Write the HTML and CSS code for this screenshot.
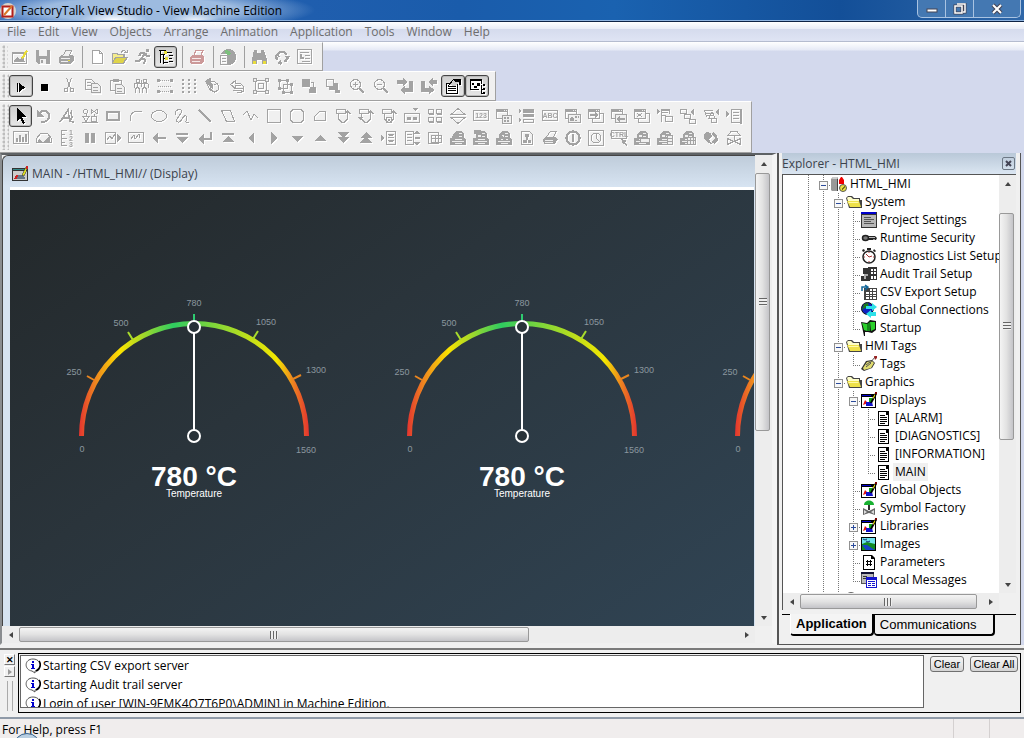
FILE: index.html
```
<!DOCTYPE html>
<html lang="en">
<head>
  <meta charset="UTF-8" />
  <title>FactoryTalk View Studio - View Machine Edition</title>
  <link rel="stylesheet" href="styles.css">
</head>
<body>

  <header class="titlebar">
    <svg class="app-icon" viewBox="0 0 16 16"><circle cx="8" cy="8" r="8" fill="#d9d4cc"/><rect x="2.5" y="3.5" width="10" height="10" fill="#fff" stroke="#b3201c" stroke-width="2"/><path d="M4 12L12 3" stroke="#d8782a" stroke-width="2"/></svg>
    <span class="app-title">FactoryTalk View Studio - View Machine Edition</span>
    <div class="window-buttons">
      <button aria-label="Minimize"><svg viewBox="0 0 16 12"><rect x="3" y="6" width="10" height="3" fill="#fff" stroke="#445" stroke-width="1"/></svg></button>
      <button aria-label="Restore"><svg viewBox="0 0 16 12"><path d="M5 1h8v8h-2M3 3h7v7H3z" fill="none" stroke="#445" stroke-width="3"/><path d="M5 1h8v8h-2M3 3h7v7H3z" fill="none" stroke="#fff" stroke-width="1.500"/></svg></button>
      <button class="close" aria-label="Close"><svg viewBox="0 0 16 12"><path d="M4 2l8 8M12 2l-8 8" stroke="#445" stroke-width="4"/><path d="M4 2l8 8M12 2l-8 8" stroke="#fff" stroke-width="2"/></svg></button>
    </div>
  </header>

  <nav class="menubar">
    <a href="#">File</a>
    <a href="#">Edit</a>
    <a href="#">View</a>
    <a href="#">Objects</a>
    <a href="#">Arrange</a>
    <a href="#">Animation</a>
    <a href="#">Application</a>
    <a href="#">Tools</a>
    <a href="#">Window</a>
    <a href="#">Help</a>
  </nav>

  <div class="dock">
    <div class="toolbar" id="standardBar"></div>
    <div class="toolbar toolbar-edit" id="editBar"></div>
    <div class="toolbar toolbar-objects" id="objectBar"></div>
  </div>

  <main class="workspace">
    <section class="mdi">
      <div class="child-window">
        <div class="child-title">
          <svg class="icon" viewBox="0 0 16 16" shape-rendering="crispEdges"><path d="M0 2h16v13H0z" fill="#333"/><path d="M1 5h14v9H1z" fill="#ccc"/><path d="M1 3h12v1H1z" fill="#388"/><path d="M2 13l3-5 2 4z" fill="#c22"/><path d="M6 9h6l1 4H5z" fill="#678"/><path d="M10 9l4-8h2l-4 9z" fill="#dd2" stroke="#333" stroke-width=".5"/><path d="M14 0h2v3h-2z" fill="#c22"/></svg>
          <span>MAIN - /HTML_HMI// (Display)</span>
        </div>
        <div class="canvas" id="canvas"></div>
      </div>
      <div class="scroll scroll-v">
        <button aria-label="Scroll up"><i class="arrow up"></i></button>
        <div class="track"><div class="thumb thumb-mdi-v"></div></div>
        <button aria-label="Scroll down"><i class="arrow down"></i></button>
      </div>
      <div class="scroll scroll-h">
        <button aria-label="Scroll left"><i class="arrow left"></i></button>
        <div class="track"><div class="thumb thumb-mdi-h"></div></div>
        <button aria-label="Scroll right"><i class="arrow right"></i></button>
      </div>
    </section>

    <aside class="explorer">
      <div class="explorer-title">
        <span>Explorer - HTML_HMI</span>
        <button class="explorer-close" aria-label="Close explorer"><svg viewBox="0 0 9 9"><path d="M2 2l5 5M7 2l-5 5" stroke="#445" stroke-width="2"/></svg></button>
      </div>
      <div class="tree-box">
        <ul class="tree" id="tree"></ul>
        <div class="scroll scroll-v">
          <button aria-label="Scroll up"><i class="arrow up"></i></button>
          <div class="track"><div class="thumb thumb-tree-v"></div></div>
          <button aria-label="Scroll down"><i class="arrow down"></i></button>
        </div>
        <div class="scroll scroll-h">
          <button aria-label="Scroll left"><i class="arrow left"></i></button>
          <div class="track"><div class="thumb thumb-tree-h"></div></div>
          <button aria-label="Scroll right"><i class="arrow right"></i></button>
        </div>
      </div>
      <div class="tabs">
        <button class="tab active">Application</button>
        <button class="tab">Communications</button>
      </div>
    </aside>
  </main>

  <section class="output">
    <div class="output-side">
      <button aria-label="Close log">✕</button>
      <button aria-label="Expand log"><i class="arrow right"></i></button>
      <div class="side-grip"></div>
    </div>
    <div class="output-frame">
      <ul class="log" id="log">
        <li>Starting CSV export server</li>
        <li>Starting Audit trail server</li>
        <li>Login of user [WIN-9EMK4O7T6P0\ADMIN] in Machine Edition.</li>
      </ul>
      <button class="clear">Clear</button>
      <button class="clear clear-all">Clear All</button>
    </div>
  </section>

  <footer class="statusbar">
    <span class="hint">For Help, press F1</span>
    <i class="orb"></i>
    <span class="status-cell"></span>
    <span class="status-cell status-last"></span>
  </footer>

  <script src="script.js"></script>
</body>
</html>
```
FILE: styles.css
```
* {
  box-sizing: border-box;
}

body {
  margin: 0;
  height: 100vh;
  display: flex;
  flex-direction: column;
  overflow: hidden;
  background: #f0f0f0;
  color: #000;
  font-family: "Open Sans", "Noto Sans", sans-serif;
  font-size: 12px;
  line-height: 18px;
}

button {
  font: inherit;
  color: inherit;
  margin: 0;
  padding: 0;
  border: none;
  background: none;
}

ul {
  list-style: none;
  margin: 0;
  padding: 0;
}

.icon {
  width: 16px;
  height: 16px;
  flex: none;
}

/* title bar */
.titlebar {
  display: flex;
  align-items: center;
  height: 22px;
  flex: none;
  border-bottom: 1px solid #0d2345;
  box-shadow: inset 0 -1px 0 #8fb4e0;
  background:
    radial-gradient(ellipse 34px 9px at 114px 20px, #fff, transparent),
    radial-gradient(ellipse 24px 8px at 195px 20px, #eef3fa, transparent),
    radial-gradient(ellipse 175px 22px at 140px 10px, #9dbbe0 55%, transparent),
    linear-gradient(90deg, #2a62b4, #1a5cab 45%, #1a62b0 60%, #134f98 82%, #2f67a8);
}

.app-icon {
  width: 16px;
  height: 16px;
  margin-right: 5px;
}

.app-title {
  flex: 1;
}

.window-buttons {
  display: flex;
  align-self: flex-start;
  height: 18px;
  margin-right: 3px;
  border: 1px solid #a9c3e2;
  border-top: none;
  border-radius: 0 0 5px 5px;
  background: #4478b2;
}

.window-buttons button {
  width: 28px;
  display: flex;
  justify-content: center;
  align-items: center;
  border-right: 1px solid #a9c3e2;
}

.window-buttons .close {
  width: 46px;
  border-right: none;
}

.window-buttons svg {
  width: 16px;
  height: 12px;
}

/* menu */
.menubar {
  display: flex;
  align-items: center;
  gap: 12px;
  height: 20px;
  flex: none;
  padding-left: 7px;
  border-bottom: 1px solid #b5bccf;
  background: linear-gradient(#fff, #e9edf7 35%, #d5dbed 36%, #dfe4f4);
}

.menubar a {
  color: #6d6d6d;
  text-decoration: none;
}

/* toolbars */
.dock {
  flex: none;
  display: flex;
  flex-direction: column;
  align-items: flex-start;
  background: linear-gradient(#fff, #e6eaf6 8px, #d3d9ed 9px);
}

.toolbar {
  display: flex;
  align-items: center;
  height: 29px;
  padding-right: 6px;
  border-top: 1px solid #fff;
  border-right: 1px solid #a0a0a0;
  border-bottom: 1px solid #a0a0a0;
  background: #f0f0f0;
}

.toolbar-edit {
  height: 30px;
}

.toolbar-objects {
  height: 52px;
}

.grip {
  width: 8px;
  align-self: stretch;
  margin: 2px 0;
  background: radial-gradient(circle at 4px 2px, #bdbdbd 1px, transparent 2px) 0 0 / 5px 4px;
}

.toolbar-edit .grip,
.toolbar-objects .grip {
  width: 9px;
}

.tool-row {
  display: flex;
  align-items: center;
}

.tool {
  width: 23px;
  height: 22px;
  display: flex;
  align-items: center;
  justify-content: center;
  color: #a3a3a3;
}

.toolbar-edit .tool {
  width: 24px;
}

.tool svg {
  width: 16px;
  height: 16px;
  overflow: visible;
  fill: none;
  stroke: currentColor;
  shape-rendering: crispEdges;
  filter: drop-shadow(1px 1px 0 #fff);
}

.tool svg .solid {
  fill: currentColor;
  stroke: none;
}

.tool svg text {
  fill: currentColor;
  stroke: none;
  font-family: "Liberation Sans", sans-serif;
  font-weight: bold;
  font-size: 7px;
  text-anchor: middle;
}

.tool.dark {
  color: #000;
}

.tool.pressed {
  color: #000;
  border: 1px solid #444;
  border-radius: 3px;
  background: linear-gradient(#cfcfcf, #e6e6e6);
  box-shadow: inset 0 0 0 1px #bbb;
}

.separator {
  width: 1px;
  height: 22px;
  margin: 0 2px 0 5px;
  background: #a0a0a0;
}

/* MDI area */
.workspace {
  flex: 1;
  min-height: 0;
  display: flex;
  background: #d3d9ed;
}

.mdi {
  flex: 1;
  min-width: 0;
  display: grid;
  grid-template-columns: 1fr 17px;
  grid-template-rows: 1fr 17px;
  border-top: 2px solid #5e6265;
  border-left: 2px solid #8a8d90;
  border-right: 5px solid #f4f4f4;
  border-bottom: 2px solid #f0f0f0;
  background: #f0f0f0;
}

.child-window {
  min-width: 0;
  display: flex;
  flex-direction: column;
  padding: 1px 1px 0 7px;
  overflow: hidden;
  border-top: 1px solid #444;
  border-left: 1px solid #444;
  border-radius: 6px 0 0 0;
  background: linear-gradient(#bfccda, #d6e3f1 30px);
}

.child-title {
  display: flex;
  align-items: center;
  gap: 4px;
  flex: none;
  height: 33px;
  padding: 4px 0 0 2px;
  color: #3b424b;
  border-bottom: 3px solid #fff;
}

.canvas {
  flex: 1;
  min-height: 0;
  display: flex;
  overflow: hidden;
  padding: 100px 0 0 20px;
  background: linear-gradient(145deg, #23282a, #2a343b 40%, #304454);
}

.gauge {
  flex: none;
  width: 328px;
  height: 216px;
  font-family: "Liberation Sans", Arial, sans-serif;
  text-anchor: middle;
}

.gauge .scale {
  font-size: 9px;
  fill: #8b979f;
}

.gauge .value {
  font-size: 28px;
  font-weight: bold;
  fill: #fff;
}

.gauge .caption {
  font-size: 10px;
  fill: #fff;
}

/* scrollbars */
.scroll {
  display: flex;
  background: #ededed;
}

.scroll-v {
  flex-direction: column;
}

.scroll button {
  width: 17px;
  height: 17px;
  display: flex;
  align-items: center;
  justify-content: center;
}

.track {
  flex: 1;
  min-width: 0;
  min-height: 0;
}

.thumb {
  display: flex;
  align-items: center;
  justify-content: center;
  border: 1px solid #999;
  border-radius: 2px;
}

.thumb::after {
  content: "";
  width: 8px;
  height: 8px;
}

.scroll-v .thumb {
  width: 15px;
  background: linear-gradient(90deg, #f4f4f4, #e2e2e2 50%, #c4c4c8);
}

.scroll-v .thumb::after {
  background: repeating-linear-gradient(#666 0 1px, #eee 1px 3px);
}

.scroll-h .thumb {
  height: 15px;
  margin-top: 1px;
  background: linear-gradient(#f4f4f4, #e2e2e2 50%, #c4c4c8);
}

.scroll-h .thumb::after {
  background: repeating-linear-gradient(90deg, #666 0 1px, #eee 1px 3px);
}

.thumb-mdi-v {
  height: 59%;
  margin-top: 1px;
}

.thumb-mdi-h {
  width: 71%;
}

.thumb-tree-v {
  height: 59%;
  margin-top: 21px;
}

.thumb-tree-h {
  width: 97%;
}

.arrow {
  border: 3px solid transparent;
}

.arrow.up {
  border-top: none;
  border-bottom: 4px solid #444;
}

.arrow.down {
  border-bottom: none;
  border-top: 4px solid #444;
}

.arrow.left {
  border-left: none;
  border-right: 4px solid #444;
}

.arrow.right {
  border-right: none;
  border-left: 4px solid #444;
}

/* explorer */
.explorer {
  flex: none;
  width: 244px;
  margin-right: 3px;
  display: flex;
  flex-direction: column;
  padding: 0 4px 8px 3px;
  border: 1px solid #555;
  border-top: none;
  border-left-width: 2px;
  background: #f0f0f0;
}

.explorer-title {
  display: flex;
  align-items: center;
  justify-content: space-between;
  flex: none;
  height: 21px;
  padding-right: 1px;
  color: #3b424b;
  background: linear-gradient(#b9c8d8, #dbe6f2);
}

.explorer-close {
  width: 13px;
  height: 13px;
  display: flex;
  align-items: center;
  justify-content: center;
  border: 1px solid #6d7885;
  border-radius: 2px;
}

.explorer-close svg {
  width: 9px;
  height: 9px;
}

.tree-box {
  flex: 1;
  min-height: 0;
  display: grid;
  grid-template-columns: 1fr 17px;
  grid-template-rows: 1fr 17px;
  border-top: 1px solid #555;
  border-left: 1px solid #555;
}

.tree {
  min-width: 0;
  min-height: 0;
  overflow: hidden;
  padding-left: 18px;
  background: #fff;
}

.tree li {
  display: flex;
  align-items: center;
  height: 18px;
  white-space: nowrap;
}

.tree .label {
  margin-left: 1px;
  padding: 0 2px;
}

.tree .selected {
  background: #f0f0f0;
}

/* connector lines between the nodes, one cell per level */
.guide {
  width: 15px;
  height: 18px;
  flex: none;
}

.guide path {
  fill: none;
  stroke: #777;
  stroke-dasharray: 1 1;
}

.guide .box {
  fill: #f8f8f8;
  stroke: #919191;
}

.guide .sign {
  stroke: #2b4b9b;
  stroke-dasharray: none;
}

.tabs {
  flex: none;
  display: flex;
  margin-top: 4px;
  padding-left: 8px;
  border-top: 1px solid #000;
  font-family: "Liberation Sans", Arial, sans-serif;
  font-size: 13px;
}

.tab {
  height: 21px;
  padding: 0 16px 0 5px;
  border: 1px solid #000;
  border-top: none;
  border-width: 0 2px 2px 1px;
  border-radius: 0 0 4px 4px;
}

.tab.active {
  margin-top: -1px;
  padding: 0 5px;
  height: 22px;
  border-left-color: #fff;
  font-weight: bold;
  background: #f4f4f4;
}

/* log output */
.output {
  flex: none;
  display: flex;
  height: 69px;
  margin-top: 3px;
  padding: 3px 3px 4px 4px;
  border-top: 2px solid #7a7a7a;
  background: #f0f0f0;
}

.output-side {
  width: 14px;
  display: flex;
  flex-direction: column;
  align-items: flex-start;
  gap: 1px;
  padding-top: 1px;
}

.output-side button {
  width: 11px;
  height: 11px;
  display: flex;
  align-items: center;
  justify-content: center;
  font-size: 9px;
  font-weight: bold;
  border: 1px solid #fff;
  border-right-color: #777;
  border-bottom-color: #777;
}

.output-side .arrow {
  border-left-color: #999;
}

.side-grip {
  width: 6px;
  height: 30px;
  margin: 3px 0 0 3px;
  border: 1px solid #aaa;
  border-width: 0 1px;
}

.output-frame {
  flex: 1;
  min-width: 0;
  display: flex;
  align-items: flex-start;
  gap: 6px;
  border: 1px solid #000;
  padding: 1px 2px 4px 1px;
}

.log {
  flex: 1;
  align-self: stretch;
  overflow: hidden;
  padding-left: 4px;
  border: 1px solid #666;
  background: #fff;
}

.log li {
  display: flex;
  align-items: center;
  gap: 2px;
  height: 19px;
  white-space: nowrap;
}

.clear {
  width: 34px;
  height: 16px;
  margin-top: 1px;
  line-height: 14px;
  border: 1px solid #707070;
  border-radius: 3px;
  background: linear-gradient(#f4f4f4, #e8e8e8 50%, #d4d4d4);
  font-family: "Liberation Sans", Arial, sans-serif;
  font-size: 11px;
}

.clear-all {
  width: 48px;
}

/* status bar */
.statusbar {
  flex: none;
  display: flex;
  align-items: center;
  height: 21px;
  padding-left: 2px;
  overflow: hidden;
  position: relative;
  border-top: 2px solid #8f9aa8;
  background: #f0eded;
}

.hint {
  flex: 1;
  padding-top: 2px;
}

/* start button peeking over the bar */
.orb {
  position: absolute;
  left: 13px;
  top: 14px;
  width: 28px;
  height: 28px;
  border: 1px solid #35618c;
  border-radius: 50%;
  background: #b9cfe2;
}

.status-cell {
  align-self: stretch;
  width: 36px;
  border-left: 1px solid #d4d0d0;
}

.status-last {
  width: 35px;
}
```
FILE: script.js
```
// p = outline path, b = solid path, c = coloured path, t = small lettering
const p = d => `<path d="${d}"/>`;
const b = d => `<path class="solid" d="${d}"/>`;
const c = (d, fill) => `<path d="${d}" fill="${fill}" stroke="none"/>`;
const t = (x, y, s) => `<text x="${x}" y="${y}">${s}</text>`;

const page = b('M0 8h3V4l3-3h6l2 3v4l2 2v5H0z') + c('M5 5h3v2H5zM9 3h3v1H9zM9 6h3v1H9zM5 9h7v1H5zM2 11h12v1H2zM5 13h7v1H5z', '#f0f0f0');
const hand = p('M1.5 1.5h9v4h-9zM3.5 6v5l3 3h3l3-3V3M10.5 5l2-2 3 3');
const win = p('M.5 1.5h11v9H.5z') + b('M0 1h12v3H0z') + c('M8 2h1v1H8zM10 2h1v1h-1z', '#f0f0f0');

const icons = {
  display: b('M0 3h13v2H0z') + p('M.5 3.5h14v11H.5z') + b('M2 12l3-4 3 2 3-2 2 5H2z') + c('M9 9l5-8 2 1-5 8z', '#e8dc3c'),
  save: b('M1 1h14v14H3l-2-2z') + c('M4 1h8v6H4zM5 10h6v5H5z', '#f0f0f0') + b('M6 11h2v3H6z'),
  print: b('M1 8l3-2h10l2 2v4l-4 3H2l-1-2z') + c('M5 7l2-5h6l-2 5z', '#f0f0f0') + p('M5.5 6.5l2-5h6l-2 5') + c('M3 9h9v1H3zM3 12h7v1H3z', '#f0f0f0') + c('M10 11h2v1h-2z', '#e8dc3c'),
  blank: c('M3 1h8l3 3v11H3z', '#fff') + p('M3.5 1.5h7l3 3v10h-10zM10.5 1.5v3h3'),
  open: b('M0 4h5l1 1h7v3h3l-4 7H0z') + c('M1 5h3l1 1h6v2H3l-2 4z', '#f4ec8c') + c('M4 9h10l-3 5H1z', '#dfd44a') + p('M9 3.5c2-3 4-2 5 0M12 3.5h3v-3'),
  run: b('M11 0h3v3h-3z') + `<path d="M10 4L7 9l3 2-1 4M7 9l-3 3H0M10 4H6L4 7M10 4l2 3h3" stroke-width="2"/>`,
  hierarchy: p('M1 1.500h3M2.500 2v12M3 5.500h4M5.500 6v9M3 1.500h5M6 9.500h4M6 13.500h4M9 3.500h5M11 6.500h4M11 9.500h3M11 12.500h4') + c('M6 2h3v3H6zM7 8h3v3H7z', '#e8dc3c'),
  plot: c('M1 8l3-2h10l1 2v4l-3 3H2l-1-2z', '#c99') + `<path d="M5 5.500l2-4h7l-2 4" stroke="#c99"/>` + c('M3 9h9v1H3zM3 12h8v1H3z', '#f6eaea'),
  globe: b('M8 0c5 0 8 3 8 8s-3 8-8 8H7V5H1c1-3 4-5 7-5z') + c('M5 1l5 1 1 3-3 1-3-2z', '#7dbf7d') + p('M.500 6.500h7v9h-7zM2 9.500h4M2 12.500h4'),
  find: b('M3 1h3v3h4V1h3l3 10v4h-5v-4H6v4H1v-4z') + c('M2 12h3v3H2zM12 12h3v3h-3z', '#e8dc3c'),
  refresh: `<path d="M5 3h5l3 3M14 8l-3 5M8 14H4M3 11L2 7l3-3" stroke-width="2.500"/>` + b('M10 7h6l-2 3zM7 10v6l-3-2zM1 7l5 1-3-4z'),
  report: p('M.500 .500h14v14H.500zM3 3.500h9M8 6.500h5M8 9.500h5M5 12.500h8') + `<path d="M3.500 5v4h3" stroke-width="2"/>`,

  play: b('M4 5h1v9H4zM6 5l6 4.500L6 14z'),
  stop: b('M4 6h7v7H4z'),
  cut: p('M5.500 0l4 10M10.500 0l-4 10M5 10a2 2 0 100 4 2 2 0 100-4M11 10a2 2 0 100 4 2 2 0 100-4'),
  copy: p('M.500 1.500h6l3 3v7h-9zM2 4.500h4M2 7.500h4') + c('M6 5h7l3 3v8H6z', '#f0f0f0') + p('M6.500 5.500h6l3 3v6h-9zM8 9.500h5M8 12.500h5'),
  paste: p('M1.500 2.500h11v10h-11z') + b('M4 1h6v3H4z') + c('M6 6h7l3 3v7H6z', '#f0f0f0') + p('M6.500 6.500h6l3 3v6h-9zM8 10.500h5M8 13.500h5'),
  people: p('M3 1h3v3H3zM1 5.500h14M4.500 4v6M2.500 15v-4l2-2 2 2v4M10 1h3v3h-3zM11.500 4v6M9.500 15v-4l2-2 2 2v4M8 2v7M1 6v4M15 6v4'),
  alignh: `<path d="M1 2.500h14M1 13.500h14M1 8.500h14" stroke-dasharray="1 1"/>` + b('M0 1h3v3H0zM13 1h3v3h-3zM0 12h3v3H0zM13 12h3v3h-3z'),
  grid: `<path d="M2 1v14M8 1v14M14 1v14" stroke-width="2" stroke-dasharray="2 2"/>`,
  rotater: p('M1.500 4.500l4-4v3h4l4 4v4l-4 3-5-3zM5.500 4v7l4 3M9 7l4-2') + b('M0 3l5-3v4l3 2v5L5 9z'),
  rotatel: p('M1.500 6.500l5-4v3h5l3 3v5l-4 1H8M1.500 6.500l5 4v-3h5M4 12.500h9M5 10.500h9'),
  group: p('M2.500 2.500h11v11h-11z') + p('M5.500 5.500h5v5h-5z') + b('M0 0h4v4H0zM12 0h4v4h-4zM0 12h4v4H0zM12 12h4v4h-4z') + c('M1 1h2v2H1zM13 1h2v2h-2zM1 13h2v2H1zM13 13h2v2h-2z', '#f0f0f0'),
  ungroup: p('M2.500 2.500h8v8h-8zM6.500 6.500h8v8h-8z') + b('M1 1h3v3H1zM9 1h3v3H9zM1 9h3v3H1zM13 5h3v3h-3zM5 13h3v3H5zM13 13h3v3h-3z'),
  front: b('M1 1h8v8H1zM9 9h6v6H8v-4h1z') + p('M9.500 4.500h3v4'),
  back: p('M1.500 1.500h7v7h-7z') + b('M4 9h5V5h4v7H4zM10 12h5v3h-5z'),
  zoomin: p('M6.500 1.500a5 5 0 100 10 5 5 0 100-10M4 6.500h5M6.500 4v5') + `<path d="M10 10l5 5" stroke-width="2"/>`,
  zoomout: p('M6.500 1.500a5 5 0 100 10 5 5 0 100-10M4 6.500h5') + `<path d="M10 10l5 5" stroke-width="2"/>`,
  undo2: b('M0 2h6V0l5 4-5 4V6H0zM12 3h4v11H8v2l-5-4 5-4v2h4z'),
  redo2: b('M16 2h-4V0L7 4l5 4V6h4zM4 3H0v11h8v2l6-4-6-4v2H4z'),
  props: c('M1 5h12v11H1z', '#fff') + p('M1.500 5.500h11v10h-11zM3 8.500h8M3 10.500h8M3 12.500h8') + c('M4 7l5-6h5v4l-4 3z', '#ccc') + p('M3 8l6-7h3') + b('M9 1h7v6h-2V4h-4z'),
  browser: c('M1 1h11v11H1z', '#fff') + p('M1.500 1.500h11v4M1.500 1.500v10h8M12.500 7v8h3M12 11.500h3') + b('M1 1h12v2H1zM3 5h2v2H3zM8 5h3v3H8zM5 8h3v2H5zM14 6h2v2h-2zM14 10h2v2h-2zM14 14h2v2h-2z'),

  pointer: b('M4 0l9 9H9l3 6-2 1-3-6-3 3z'),
  undo: `<path d="M3 6c3-5 10-4 10 2s-5 6-8 6" stroke-width="2"/>` + b('M1 1v8h7z'),
  text: `<path d="M1 14L9 2l2 12M4 10h7M13 3c-3 2 2 5-1 8s2 3 3 3" stroke-width="1.500"/>`,
  symbols: p('M3.500 1.500a2 2 0 100 4 2 2 0 100-4M9 1.500l6 4v-4l-6 4zM1 8.500h6l-3 5zM9.500 8.500h5v5h-5zM0 14.500h16M12 6v3M4 6v3'),
  rect: `<path d="M2 4h12v8H2z" stroke-width="2"/>`,
  arc: p('M2.500 13c-2-7 4-12 11-9'),
  ellipse: p('M8 2.500c10 0 10 11 0 11s-10-11 0-11'),
  freehand: p('M1 7c0-7 9-7 6-2s-7 8-3 9 5-8 8-6-4 8 3 6'),
  line: `<path d="M2 2l12 12" stroke-width="2"/>`,
  polygon: p('M1.500 2.500h9l4 11h-8z'),
  polyline: p('M0 7l4-4 4 9 3-6 4 4'),
  square: p('M1.500 1.500h13v13h-13z'),
  roundrect: p('M4 1.500h8l2.500 2.500v8L12 14.500H4L1.500 12V4z'),
  wedge: p('M2.500 12.500v-4l5-5h6v9z'),
  momentary: hand,
  maintained: hand + b('M0 9h5l-2 4z'),
  latched: hand + p('M8 9a3 3 0 100 6 3 3 0 100-6') + b('M7 11h2v2H7z'),
  multistate: p('M.500 5.500h15v9H.500z') + b('M3 9h4v3H3zM9 9h4v3H9zM9 0h5l-2.500 3z'),
  interlocked: p('M1.500 1.500h5v4h-5zM9.500 1.500h5v4h-5zM1.500 9.500h5v4h-5zM9.500 9.500h5v4h-5z') + b('M2 5h5v2H2zM10 5h5v2h-5zM2 13h5v2H2zM10 13h5v2h-5z'),
  ramp: p('M1 6.500L8 .500l7 6zM1 9.500l7 6 7-6z'),
  numeric: p('M.500 2.500h15v10H.500z') + t(8, 10, '123'),
  numentry: win + c('M6 7h10v9H6z', '#f0f0f0') + p('M6.500 7.500h9v8h-9z') + b('M8 9h2v2H8zM11 9h2v2h-2zM8 12h2v2H8zM11 12h2v2h-2z'),
  pilot: b('M4 1h11v4H4zM4 6h11v3H4zM0 1l3 2-3 2zM0 10l3 2-3 2z') + p('M4.500 11.500h10v3h-10z'),
  string: p('M.500 2.500h15v10H.500z') + t(8, 10, 'ABC'),
  strentry: win + c('M3 6h13v9H3z', '#f0f0f0') + p('M3.500 6.500h12v8h-12z') + b('M5 11l2-3 2 3v2H5zM10 8h2v2h-2zM13 8h1v2h-1zM10 12h2v1h-2z'),
  goto: win + p('M12 5.500h3.500v9h-11v-4') + b('M2 6h5V4l4 3-4 3V8H2z'),
  back2: win + c('M4 6h12v9H4z', '#f0f0f0') + p('M4.500 6.500h11v8h-11z') + b('M14 10H9V8l-4 3 4 3v-2h5z'),
  close: win + p('M3 5l5 4M8 5l-5 4M12 5.500h3.500v9h-11v-4'),
  dlist: p('M4.500 1.500h8v4M4.500 1v13M5 4.500h6M5 7.500h4M8.500 8.500h7v5h-7z') + b('M0 1l3 3-3 2zM4 1h9v2H4z'),
  macro: p('M.500 1.500h6v4h-6zM4.500 6.500h6v4h-6zM9.500 11.500h6v4h-6z') + b('M10 4l4-3v6z'),
  symbol: p('M1 2.500h9M2 5.500h9M3 7.500h7M1 2l3 7M6 10l3-6 3 6zM8 10.500h5v4H8z') + b('M12 4l4-3v6z'),
  listsel: p('M5.500 1.500h9v13h-9zM7 4.500h6M7 7.500h6M7 10.500h6') + b('M0 3l4 3-4 3zM14 1h2v15h-2z'),

  bars: p('M.500 1.500h15v12H.500z') + b('M3 8h2v4H3zM6 5h2v7H6zM9 7h2v5H9zM12 4h2v8h-2z'),
  gauge: p('M.500 12.500v-4l4-5h7l4 5v4z') + b('M3 9l4 4 7-8v8H1z'),
  scale: p('M2.500 0v16M2.500 .500h5M2.500 4.500h3M2.500 8.500h5M2.500 12.500h3M2.500 15.500h5') + t(12, 5, '1') + t(12, 11, '2') + t(12, 17, '3'),
  pause: b('M3 3h4v10H3zM9 3h4v10H9z'),
  trend: p('M.500 2.500h10v11H.500zM2 10l3-4 2 3 3-5') + b('M12 4l4 4-4 4z'),
  trend2: p('M.500 2.500h15v10H.500zM3 9l3-4 1 4 4-5 1 4'),
  left: b('M1 8l6-5v4h8v2H7v4z'),
  pgdn: b('M2 3h12v2H2zM2 7h12l-6 6z'),
  enter: b('M1 9l6-5v4h6V2h2v8H7v4z'),
  pgup: b('M2 3h12v2H2zM2 12h12L8 6z'),
  tleft: b('M11 2v12L5 8z'),
  tright: b('M5 2v12l6-6z'),
  tdown: b('M2 6h12l-6 6z'),
  tup: b('M2 11h12L8 5z'),
  ddown: b('M2 2h12L9 7h5l-6 6-6-6h5z'),
  dup: b('M8 2l6 6h-4l4 5H2l4-5H2z'),
  lista: p('M5.500 1.500h9v13h-9zM7 4.500h6M7 7.500h6M7 10.500h6') + b('M0 5l3 3-3 3zM8 4h4v2H8zM8 10h4v2H8z'),
  listb: p('M1.500 1.500h8v13h-8zM3 4.500h5M3 7.500h5M3 10.500h5') + b('M13 0l3 4h-6zM13 16l3-4h-6zM11 7h5v2h-5z'),
  table: p('M1.500 2.500h10v11h-10zM4.500 5.500h10v7h-10zM8 5v8M11 5v8M5 8.500h9'),
  alarma: page + b('M1 7l4-4 3 3-4 4z'),
  alarmb: page + b('M1 0h7v4H1z'),
  alarmc: page + `<path d="M4 5l6 6" stroke-width="2"/>`,
  diag: p('M2.500 1.500h8l3 3v10h-11z') + b('M6 4h4v3H6zM4 10h4v3H4zM9 10h3v3H9zM7 7h2v3H7z'),
  printer: b('M1 9l3-2h9l3 2-3 5H2z') + p('M4.500 7l4-6h6l-3 6') + c('M3 10h8v1H3zM3 12h8v1H3z', '#f0f0f0'),
  power: `<circle cx="8" cy="8" r="6.500" stroke-width="2.500"/>` + b('M7 4h2v8H7z'),
  clock: p('M.500 .500h15v15H.500zM8 3a5 5 0 100 10A5 5 0 108 3M8 4v4l3 3'),
  ctrl: p('M.500 .500h15v8H.500z') + t(8, 7, 'CTRL') + b('M10 9l6 2-2 1 2 3-1 1-2-3-1 1z'),
  banner: page + c('M7 8h8v5H7z', '#f0f0f0') + p('M6.500 8.500h9v4h-9z'),
  bannerb: page + c('M10 5h6v10h-6z', '#f0f0f0') + p('M10.500 5.500h5v9h-5zM11 8.500h4M11 11.500h4'),
  bannerc: page + c('M7 7h9v8H7z', '#f0f0f0') + p('M7.500 7.500h8v7h-8zM10.500 7v8M13.500 7v8M7 10.500h9'),
  world: b('M3 2l5 1 1 4-3 2 3 5-4-1-4-5V4zM10 2l4 3 1 5-3 4-3-1 1-3 3-2-4-3z'),
  valve: p('M5 1.500h6l3 4H2zM8 6v5M1.500 8.500l6 3-6 3zM14.500 8.500l-6 3 6 3z')
};

function tool(entry) {
  const [name, mode] = entry.split(':');
  if (name === '-') return '<span class="separator"></span>';
  return `<button class="tool ${mode || ''}" aria-label="${name}"><svg viewBox="0 0 16 16">${icons[name]}</svg></button>`;
}

function buildBar(id, ...rows) {
  const html = rows.map(r => `<div class="tool-row">${r.split(' ').map(tool).join('')}</div>`).join('');
  document.getElementById(id).innerHTML = `<div class="grip"></div><div>${html}</div>`;
}

buildBar('standardBar', 'display save print - blank open run hierarchy:pressed - plot - globe - find refresh report');
buildBar('editBar', 'play:pressed stop:dark cut copy paste people alignh grid rotater rotatel group ungroup front back zoomin zoomout undo2 redo2 props:pressed browser:pressed');
buildBar('objectBar',
  'pointer:pressed undo text symbols rect arc ellipse freehand line polygon polyline square roundrect wedge momentary maintained latched multistate interlocked ramp numeric numentry pilot string strentry goto back2 close dlist macro symbol listsel',
  'bars gauge scale pause trend trend2 left pgdn enter pgup tleft tright tdown tup ddown dup lista listb table alarma alarmb alarmc diag printer power clock ctrl banner bannerb bannerc world valve');

// gauges
function gauge() {
  return `<svg class="gauge" viewBox="30 290 328 216">
    <defs><linearGradient id="heat" gradientUnits="userSpaceOnUse" x1="79" y1="0" x2="309" y2="0">
      <stop offset="0" stop-color="#e4342f"/><stop offset=".02" stop-color="#e64a2b"/><stop offset=".07" stop-color="#ee8420"/>
      <stop offset=".18" stop-color="#fbe300"/><stop offset=".41" stop-color="#2ecc60"/><stop offset=".5" stop-color="#5ad04c"/>
      <stop offset=".86" stop-color="#f4e600"/><stop offset=".93" stop-color="#ee8420"/><stop offset=".98" stop-color="#e64a2b"/><stop offset="1" stop-color="#e4342f"/>
    </linearGradient></defs>
    <path d="M81.500 436a112.500 112.500 0 01225 0" fill="none" stroke="url(#heat)" stroke-width="5"/>
    <g stroke-width="2">
      <path d="M87 376l7 4M301 375l-8 4" stroke="#e8851f"/>
      <path d="M128 332l5 8M258 331l-5 8" stroke="#a8dc2c"/>
      <path d="M194 314v7" stroke="#2ecc71"/>
    </g>
    <g class="scale">
      <text x="82" y="452">0</text><text x="74" y="375">250</text><text x="121" y="326">500</text><text x="194" y="306">780</text>
      <text x="266" y="325">1050</text><text x="316" y="373">1300</text><text x="306" y="453">1560</text>
    </g>
    <g stroke="#fff" stroke-width="2" fill="#283238"><path d="M194 333v97"/><circle cx="194" cy="327" r="6"/><circle cx="194" cy="436" r="6"/></g>
    <text class="value" x="194" y="486">780 °C</text>
    <text class="caption" x="194" y="497">Temperature</text>
  </svg>`;
}
document.getElementById('canvas').innerHTML = gauge() + gauge() + gauge();

// explorer tree
const folder = c('M0 4l2-2h4l2 2h6v2h2v8H3z', '#444') + c('M1 4l1-1h3l2 2h6v2H2z', '#fdfdc8') + c('M1 7h12l2 6H4z', '#eee14a') + c('M2 8h10l1 1H3z', '#fff9a8');
const board = c('M0 2h15v14H0z', '#000') + c('M1 5h13v10H1z', '#fff') + c('M1 3h9v1H1z', '#00c') + c('M2 13l2-5 3 3z', '#d11') + c('M5 10h6l1 4H5z', '#11c') + c('M8 6h3v4H8z', '#1a1') + c('M9 11l5-10 2 1-5 9z', '#000') + c('M12 5l2-3v2l-2 3z', '#e8e000') + c('M14 0h2v2h-2z', '#700');
const doc = c('M2 1h11v15H2z', '#000') + c('M3 2h7v3h2v10H3z', '#fff') + c('M4 5h5v1H4zM4 7h7v1H4zM4 9h7v1H4zM4 11h7v1H4zM4 13h5v1H4z', '#000');
const nodeIcons = {
  folder, board, doc,
  server: c('M0 3l2-2h5v14H1l-1-1z', '#999') + c('M2 1h5l-1 2H1z', '#ccc') + c('M6 3h1v12H6z', '#444') + c('M8 8V4l2-3h1l2 3v4z', '#e00') + `<circle cx="12" cy="12" r="3.500" fill="#e8e040" stroke="#555"/>` + c('M11 13l3-3v1l-3 3z', '#000'),
  settings: c('M0 0h16v16H0z', '#333') + c('M1 3h14v12H1z', '#b8b8b8') + c('M0 0h15v2H0z', '#00c') + c('M3 5h7v1H3zM3 7h10v1H3zM3 9h7v1H3zM3 11h10v1H3z', '#555'),
  key: `<ellipse cx="4.500" cy="8" rx="3" ry="2.500" fill="#777" stroke="#222" stroke-width="1.500"/>` + c('M7 6h7l2 2-1 2h-1l-1-1-1 1H7z', '#222') + c('M8 7h6v1H8z', '#bbb'),
  watch: `<circle cx="8" cy="9" r="6" fill="#fff" stroke="#222" stroke-width="1.500"/>` + c('M6 0h4v2H6zM1 2l2-1 1 2-2 1zM13 1l2 2-1 1-2-1z', '#222') + `<path d="M8 9L5 6M8 9l3-1M8 5v-1M8 14v-1M3 9h1M12 9h1" stroke="#a33"/>`,
  audit: c('M7 1h9v13H7z', '#333') + c('M10 3h2v2h-2zM13 3h2v2h-2zM10 6h2v2h-2zM13 6h2v2h-2zM10 10h2v3h-2zM13 10h2v3h-2z', '#fff') + c('M2 2h6v6H2zM0 10h9v5H0z', '#333') + c('M3 8h4v2H3zM3 10h2v3H3z', '#aaa'),
  csv: c('M3 4h13v12H3z', '#444') + c('M5 8h3v2H5zM9 5h2v2H9zM12 5h3v2h-3zM9 8h2v2H9zM12 8h3v2h-3zM5 11h3v1H5zM9 11h2v1H9zM12 11h3v1h-3zM5 13h3v2H5zM9 13h2v2H9zM12 13h3v2h-3z', '#fff') + `<path d="M1 7V3h5M4 1l3 2-3 3" fill="none" stroke="#169" stroke-width="1.500"/>`,
  network: `<circle cx="6.500" cy="6.500" r="6" fill="#1020c0" stroke="#111"/>` + c('M3 2l4-1 1 4-4 1-3 2z', '#1a7a1a') + c('M5 4h6V1l5 4-5 4V7H5z', '#2de0e8') + c('M15 10h-5V8l-5 4 5 4v-2h5z', '#2de0e8'),
  flag: c('M0 2l6 1 3-3 6 1v9l-4 3-4-1-3 0v4H3z', '#111') + c('M1 3l5 1v7l-3-1zM9 2l5 0v7l-4 2z', '#2bd02b') + c('M6 4l3-2v9H6z', '#17881b'),
  tag: c('M0 13l5-8 6-1 3 3-3 5-8 3z', '#333') + c('M2 12l4-6 5-1 2 2-3 5-7 2z', '#e0dc70') + `<path d="M5 11l5-4M5 9l4-3M9 7l5-6" stroke="#555"/>` + c('M13 0h3v2l-2 2z', '#922'),
  valve: c('M3 5c0-6 10-6 10 0z', '#18b030') + c('M7 5h2v5H7z', '#333') + c('M2 8l6 3 6-3v7l-6-2-6 2z', '#666') + c('M3 10l3 2-3 2zM13 10l-3 2 3 2z', '#ddd'),
  image: c('M0 1h15v14H0z', '#000') + c('M1 2h13v6H1z', '#6fe3ee') + c('M1 8l5-2 8 2v6H1z', '#118a22') + c('M1 9l5 0 8 5H5z', '#1544c8') + `<path d="M2 3l2 1 2-1M5 5l2 1 2-1" fill="none" stroke="#137"/>`,
  hash: c('M2 1h9l3 3v12H2z', '#000') + c('M3 2h7v3h3v10H3z', '#fff') + `<path d="M6.500 6v6M9.500 6v6M5 7.500h6M5 10.500h6" stroke="#000"/>`,
  messages: c('M0 0h13v12H0z', '#555') + c('M1 2h11v9H1z', '#bbb') + c('M0 0h13v2H0z', '#113') + c('M2 4h4v1H2zM2 6h3v1H2z', '#333') + c('M5 5h11v11H5z', '#1515d0') + c('M6 8h9v7H6z', '#fff') + c('M7 9h7v1H7zM7 11h3v1H7zM11 11h3v1h-3zM7 13h3v1H7zM11 13h3v1h-3z', '#1515d0'),
  round: `<circle cx="5" cy="8" r="5.500" fill="#ddd" stroke="#666"/>`
};

// guides: | line, T tee, L elbow, M expanded box, P collapsed box
const nodes = [
  ['|M', 'server', 'HTML_HMI'],
  ['||M', 'folder', 'System'],
  ['|||T', 'settings', 'Project Settings'],
  ['|||T', 'key', 'Runtime Security'],
  ['|||T', 'watch', 'Diagnostics List Setup'],
  ['|||T', 'audit', 'Audit Trail Setup'],
  ['|||T', 'csv', 'CSV Export Setup'],
  ['|||T', 'network', 'Global Connections'],
  ['|||L', 'flag', 'Startup'],
  ['||M', 'folder', 'HMI Tags'],
  ['|||L', 'tag', 'Tags'],
  ['||M', 'folder', 'Graphics'],
  ['|||M', 'board', 'Displays'],
  ['||||T', 'doc', '[ALARM]'],
  ['||||T', 'doc', '[DIAGNOSTICS]'],
  ['||||T', 'doc', '[INFORMATION]'],
  ['||||L', 'doc', 'MAIN', 'selected'],
  ['|||T', 'board', 'Global Objects'],
  ['|||T', 'valve', 'Symbol Factory'],
  ['|||P', 'board', 'Libraries'],
  ['|||P', 'image', 'Images'],
  ['|||T', 'hash', 'Parameters'],
  ['|||L', 'messages', 'Local Messages'],
  ['|||', 'round', '']
];

function guide(ch) {
  let s = '';
  if ('|TMP'.includes(ch)) s += '<path d="M7.500 0v18"/>';
  if (ch === 'L') s += '<path d="M7.500 0v10"/>';
  if ('TLMP'.includes(ch)) s += '<path d="M7 10.500h8"/>';
  if ('MP'.includes(ch)) s += '<rect class="box" x="3.500" y="6.500" width="8" height="8"/><path class="sign" d="M5 10.500h5"/>';
  if (ch === 'P') s += '<path class="sign" d="M7.500 8v5"/>';
  return `<svg class="guide" viewBox="0 0 15 18" shape-rendering="crispEdges">${s}</svg>`;
}

document.getElementById('tree').innerHTML = nodes.map(([g, icon, label, cls]) =>
  `<li>${[...g].map(guide).join('')}<svg class="icon" viewBox="0 0 16 16">${nodeIcons[icon]}</svg><span class="label ${cls || ''}">${label}</span></li>`
).join('');

// log bullets
const info = '<svg class="icon" viewBox="0 0 16 16"><path d="M8 1c9 0 9 11 2 12v2l-3-2C-1 12-1 1 8 1z" fill="#fff" stroke="#555"/><path d="M11 13c5-2 5-8 3-10" fill="none" stroke="#000" stroke-width="1.500"/><path d="M7 3h2v2H7zM6 6h3v4h1v1H6v-1h1V7H6z" fill="#00c"/></svg>';
document.querySelectorAll('#log li').forEach(li => li.insertAdjacentHTML('afterbegin', info));
```
